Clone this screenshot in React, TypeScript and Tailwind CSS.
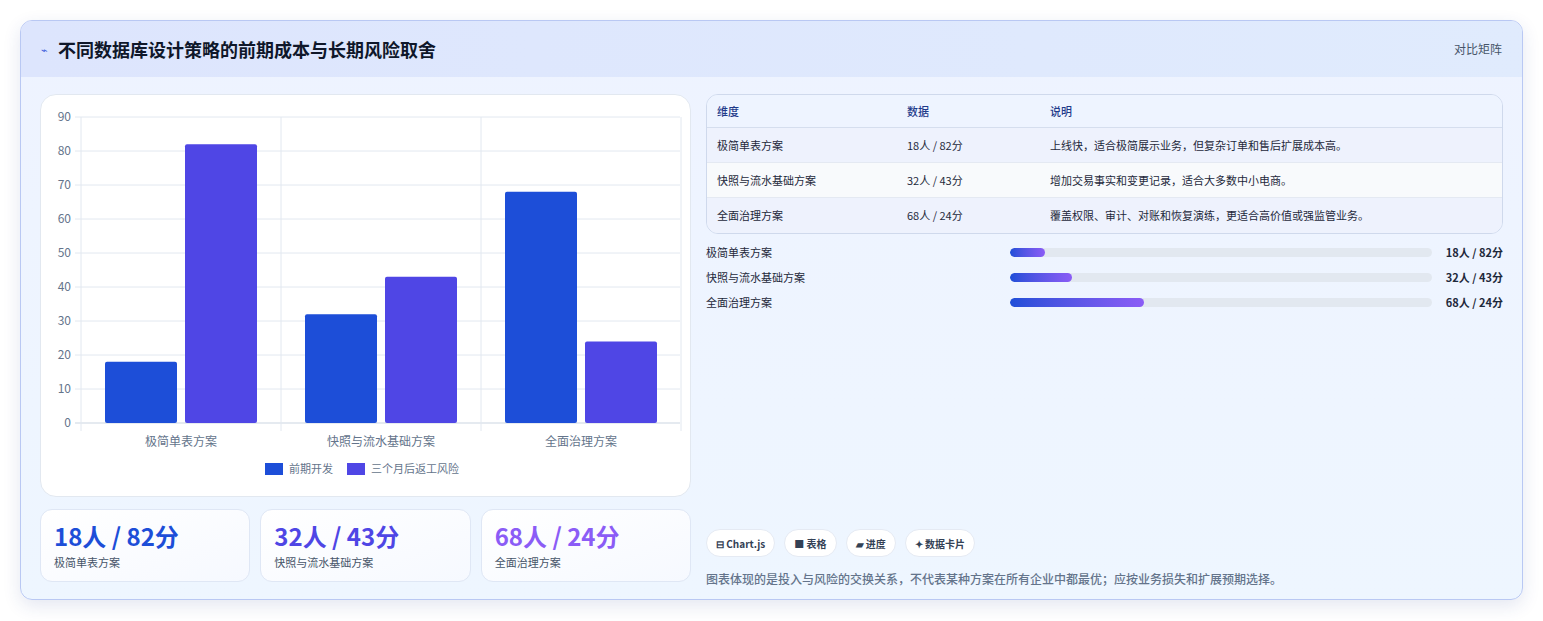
import React from "react";

const F = { fontFamily: '"Noto Sans CJK SC", "Noto Sans", sans-serif' };
const groups = [
  { n: "极简单表方案", a: 18, b: 82, t: "18人 / 82分", d: "上线快，适合极简展示业务，但复杂订单和售后扩展成本高。", p: 8.3 },
  { n: "快照与流水基础方案", a: 32, b: 43, t: "32人 / 43分", d: "增加交易事实和变更记录，适合大多数中小电商。", p: 14.8 },
  { n: "全面治理方案", a: 68, b: 24, t: "68人 / 24分", d: "覆盖权限、审计、对账和恢复演练，更适合高价值或强监管业务。", p: 31.8 },
];

function Chart() {
  const x0 = 40, y0 = 328, u = 3.4;
  return (
    <svg width="651" height="402" className="block">
      {[0, 10, 20, 30, 40, 50, 60, 70, 80, 90].map((v) => (
        <g key={v}>
          <line x1={x0 - 6} x2={639} y1={y0 - v * u} y2={y0 - v * u} stroke={v === 0 ? "#cbd5e1" : "#e2e8f0"} />
          <text x={x0 - 10} y={y0 - v * u + 4} fontSize="12" fill="#64748b" textAnchor="end" style={F}>{v}</text>
        </g>
      ))}
      {[0, 1, 2, 3].map((i) => (
        <line key={i} x1={x0 + i * 200} x2={x0 + i * 200} y1={22} y2={y0 + 8} stroke="#e2e8f0" />
      ))}
      {groups.map((g, i) => (
        <g key={i}>
          <rect x={x0 + i * 200 + 24} y={y0 - g.a * u} width="72" height={g.a * u} rx="2" fill="#1d4ed8" />
          <rect x={x0 + i * 200 + 104} y={y0 - g.b * u} width="72" height={g.b * u} rx="2" fill="#4f46e5" />
          <text x={x0 + i * 200 + 100} y={351} fontSize="12" fill="#64748b" textAnchor="middle" style={F}>{g.n}</text>
        </g>
      ))}
      <rect x={224} y={368} width="18" height="12" fill="#1d4ed8" />
      <text x={248} y={378} fontSize="11" fill="#64748b" style={F}>前期开发</text>
      <rect x={306} y={368} width="18" height="12" fill="#4f46e5" />
      <text x={330} y={378} fontSize="11" fill="#64748b" style={F}>三个月后返工风险</text>
    </svg>
  );
}

export default function App() {
  const colors = ["text-[#1d4ed8]", "text-[#4f46e5]", "text-[#8b5cf6]"];
  return (
    <div className="w-[1543px] h-[621px] bg-white pt-[20px] pl-[20px]" style={F}>
      <div className="w-[1503px] h-[580px] rounded-xl border border-[#b9c8f3] overflow-hidden shadow-[0_6px_18px_rgba(30,58,138,0.12)] bg-gradient-to-b from-[#eef3ff] to-[#eef6ff] flex flex-col">
        <div className="h-[56px] shrink-0 bg-gradient-to-r from-[#dde5fd] to-[#e0ebfd] flex items-center justify-between px-[20px]">
          <div className="flex items-center gap-[10px]">
            <span className="text-[#3b5bdb] text-[11px]">⌁</span>
            <span className="text-[18px] font-bold text-[#0f172a]">不同数据库设计策略的前期成本与长期风险取舍</span>
          </div>
          <span className="text-[12px] text-[#475569]">对比矩阵</span>
        </div>
        <div className="flex gap-[15px] px-[19px] pt-[17px]">
          <div className="w-[651px] flex flex-col gap-[12px]">
            <div className="h-[403px] bg-white rounded-2xl border border-[#e2e8f0]"><Chart /></div>
            <div className="grid grid-cols-3 gap-[10px]">
              {groups.map((g, i) => (
                <div key={i} className="h-[73px] rounded-xl border border-[#dfe7f5] bg-gradient-to-br from-white to-[#f6f9ff] px-[13px] pt-[10px]">
                  <div className={`text-[24px] font-bold leading-[32px] ${colors[i]}`}>{g.t}</div>
                  <div className="text-[11px] text-[#475569] mt-[2px]">{g.n}</div>
                </div>
              ))}
            </div>
          </div>
          <div className="w-[797px] flex flex-col">
            <div className="rounded-xl border border-[#cfd9ec] overflow-hidden text-[11px] text-[#1e293b]">
              <div className="h-[33px] flex items-center bg-[#eef4ff] border-b border-[#d5deee] text-[#1e3a8a] font-medium">
                <div className="w-[200px] pl-[10px]">维度</div><div className="w-[143px]">数据</div><div>说明</div>
              </div>
              {groups.map((g, i) => (
                <div key={i} className={`h-[35px] flex items-center border-b border-[#e4e9f2] last:border-b-0 ${i === 1 ? "bg-[#f8fafc]" : "bg-[#eef2fd]"}`}>
                  <div className="w-[200px] pl-[10px]">{g.n}</div><div className="w-[143px]">{g.t}</div><div>{g.d}</div>
                </div>
              ))}
            </div>
            <div className="flex flex-col gap-[15px] mt-[13px]">
              {groups.map((g, i) => (
                <div key={i} className="flex items-center h-[10px] text-[11px] text-[#1e293b]">
                  <div className="w-[304px]">{g.n}</div>
                  <div className="w-[422px] h-[9px] rounded-full bg-[#e2e8f0] overflow-hidden">
                    <div className="h-full rounded-full bg-gradient-to-r from-[#1d4ed8] to-[#8b5cf6]" style={{ width: `${g.p}%` }} />
                  </div>
                  <div className="flex-1 text-right font-bold">{g.t}</div>
                </div>
              ))}
            </div>
            <div className="mt-[222px] flex gap-[9px] text-[10px] font-semibold text-[#334155]">
              {["⊟ Chart.js", "■ 表格", "▰ 进度", "✦ 数据卡片"].map((c) => (
                <span key={c} className="h-[28px] px-[9px] rounded-full bg-white border border-[#e5eaf3] flex items-center">{c}</span>
              ))}
            </div>
            <div className="mt-[13px] text-[12px] text-[#64748b] font-medium">图表体现的是投入与风险的交换关系，不代表某种方案在所有企业中都最优；应按业务损失和扩展预期选择。</div>
          </div>
        </div>
      </div>
    </div>
  );
}
